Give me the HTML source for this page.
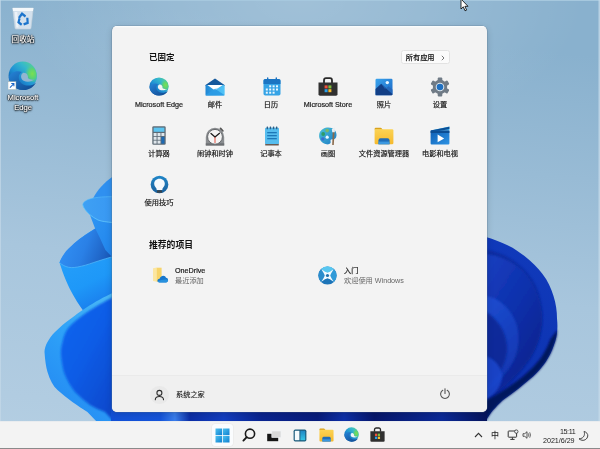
<!DOCTYPE html>
<html lang="zh-CN">
<head>
<meta charset="utf-8">
<title>Windows 11 开始菜单</title>
<style>
*{margin:0;padding:0;box-sizing:border-box}
html,body{width:600px;height:449px;overflow:hidden;background:#b3cbde}
body{position:relative;font-family:"Liberation Sans","Noto Sans CJK SC",sans-serif;color:#1b1b1b;-webkit-font-smoothing:antialiased}
#wall{position:absolute;left:0;top:0;width:600px;height:449px}
.abs{position:absolute}
.h,.app,.t1,.t2,.tt,.dlabel,#allbtn{will-change:transform}
/* desktop icons */
.dlabel{position:absolute;color:#fff;font-size:7.600px;line-height:9.500px;text-align:center;text-shadow:0 0 1.500px #000,0 0 1.500px #000,0 0 2px #000,0 1px 2px rgba(0,0,0,.8);white-space:nowrap;-webkit-text-stroke:.15px #fff}
/* start menu */
#start{position:absolute;left:112px;top:26px;width:375px;height:386px;background:#f3f3f3;border-radius:5px;box-shadow:0 0 0 0.6px rgba(90,115,140,.45),0 2px 7px rgba(0,0,0,.16);overflow:hidden}
#start:before{content:"";position:absolute;left:0;top:0;right:0;height:1.500px;background:linear-gradient(#fcfeff,#f3f3f3);z-index:0}
#foot{position:absolute;left:0;top:349px;width:375px;height:37px;background:#f0f0f0;border-top:1px solid #eaeaea}
.h{position:absolute;font-size:8.5px;font-weight:700;line-height:10px;color:#111;white-space:nowrap}
.app{position:absolute;width:70px;margin-left:-35px;text-align:center;font-size:7.2px;line-height:9px;color:#1a1a1a;white-space:nowrap;font-weight:400;-webkit-text-stroke:.2px #1a1a1a}
.ico{position:absolute}
#allbtn{position:absolute;left:289px;top:24px;width:48.500px;height:14px;background:#fbfbfb;border:0.5px solid #e2e2e2;border-radius:2.5px;font-size:7.2px;line-height:13px;padding-left:3.800px;color:#151515;white-space:nowrap;font-weight:500;-webkit-text-stroke:.12px #151515}
.t1{position:absolute;font-size:7.2px;line-height:9px;color:#1a1a1a;white-space:nowrap;font-weight:400;-webkit-text-stroke:.2px #1a1a1a}
.t2{position:absolute;font-size:7.2px;line-height:9px;color:#666;white-space:nowrap}
/* taskbar */
#task{position:absolute;left:0;top:421px;width:600px;height:28px;background:#f3f3f3;border-top:1px solid #e9ecef}
#task:after{content:"";position:absolute;left:0;bottom:0;width:600px;height:1px;background:#8a8a8a}
.tt{position:absolute;font-size:7.2px;line-height:9px;color:#222;white-space:nowrap;text-align:right}
</style>
</head>
<body>
<svg id="wall" viewBox="0 0 600 449">
<defs>
<linearGradient id="bg" x1="0.150" y1="0" x2="0" y2="1">
<stop offset="0" stop-color="#89b1ce"/><stop offset="0.270" stop-color="#98bbd5"/><stop offset="0.550" stop-color="#a8c6dd"/><stop offset="0.880" stop-color="#b1cce1"/><stop offset="1" stop-color="#b5cfe3"/>
</linearGradient>
<linearGradient id="rc" x1="0.3" y1="0" x2="0" y2="1"><stop offset="0" stop-color="#1039ba"/><stop offset="0.55" stop-color="#0d34b2"/><stop offset="0.85" stop-color="#0c2ca0"/><stop offset="1" stop-color="#0a2490"/></linearGradient>
<linearGradient id="l1" x1="0" y1="0" x2="1" y2="0"><stop offset="0" stop-color="#3fa0f4"/><stop offset="1" stop-color="#3898f2"/></linearGradient>
<linearGradient id="l2" x1="0" y1="0" x2="1" y2="1"><stop offset="0" stop-color="#339af5"/><stop offset="1" stop-color="#2084ec"/></linearGradient>
<linearGradient id="l3" x1="0" y1="0.300" x2="1" y2="0.600"><stop offset="0" stop-color="#3292f6"/><stop offset="0.500" stop-color="#2a80e6"/><stop offset="1" stop-color="#1a58b8"/></linearGradient>
<linearGradient id="l4" x1="0" y1="0" x2="0.300" y2="1"><stop offset="0" stop-color="#2aa4fc"/><stop offset="0.700" stop-color="#1e98f8"/><stop offset="1" stop-color="#1a7cec"/></linearGradient>
<linearGradient id="l5" x1="0.800" y1="0" x2="0.300" y2="1"><stop offset="0" stop-color="#48b6f6"/><stop offset="0.450" stop-color="#2ea2f8"/><stop offset="1" stop-color="#2388f2"/></linearGradient>
<linearGradient id="l6" x1="0" y1="0" x2="0.800" y2="1"><stop offset="0" stop-color="#0e68f0"/><stop offset="0.500" stop-color="#0a5ce6"/><stop offset="1" stop-color="#0a48cc"/></linearGradient>
<linearGradient id="r2" x1="0" y1="0" x2="0.600" y2="1"><stop offset="0" stop-color="#173fc0"/><stop offset="0.500" stop-color="#0e30ac"/><stop offset="1" stop-color="#09228c"/></linearGradient>
<linearGradient id="r3" x1="0" y1="0" x2="0.300" y2="1"><stop offset="0" stop-color="#1d4cd0"/><stop offset="1" stop-color="#1036b0"/></linearGradient>
<linearGradient id="strip" x1="0" y1="0" x2="1" y2="0"><stop offset="0" stop-color="#1250d6"/><stop offset="0.130" stop-color="#1554da"/><stop offset="0.170" stop-color="#3a7eec"/><stop offset="0.210" stop-color="#0c2ea6"/><stop offset="0.300" stop-color="#133ec0"/><stop offset="0.400" stop-color="#0a2490"/><stop offset="0.550" stop-color="#081c7c"/><stop offset="0.620" stop-color="#0e30a8"/><stop offset="0.700" stop-color="#07176c"/><stop offset="0.880" stop-color="#0c2a98"/><stop offset="1" stop-color="#06145c"/></linearGradient>
<radialGradient id="bgc" cx="0.5" cy="0.5" r="0.5"><stop offset="0" stop-color="#fff" stop-opacity=".2"/><stop offset="0.450" stop-color="#fff" stop-opacity=".125"/><stop offset="0.850" stop-color="#fff" stop-opacity=".03"/><stop offset="1" stop-color="#fff" stop-opacity="0"/></radialGradient>
<filter id="blur2" x="-20%" y="-20%" width="140%" height="140%"><feGaussianBlur stdDeviation="1.300"/></filter>
<filter id="blur1" x="-20%" y="-20%" width="140%" height="140%"><feGaussianBlur stdDeviation="0.800"/></filter>
</defs>
<rect width="600" height="449" fill="url(#bg)"/>
<ellipse cx="300" cy="0" rx="285" ry="150" fill="url(#bgc)"/>
<rect width="600" height="1" fill="#a6c8de"/><rect x="598.500" width="1.500" height="449" fill="#c4d9e8" opacity=".8"/><rect width="1" height="449" fill="#c4d9e8" opacity=".7"/>
<!-- left bloom -->
<path d="M59.500 262.500 C64 252 78 238 96 228 L113 240 L113 320 L90 320 C84 312 78 304 73 294.800 C68 286 63 274 59.500 262.500Z" fill="url(#l4)"/>
<path d="M59.500 262.500 C62 256 66 251 66.600 250.400 C70 247 73 244 77 240.900 C80 238.500 84 236 87.700 233.500 C90 232 93 230 96 228 L100 226 L113 240 L113 256.500 C108 258 103 259.500 98.300 261 C92 263 87 265 81.400 266.200 C76 267.500 72 268 68.700 267.300 C65 266.500 62 265 59.500 262.500Z" fill="url(#l3)"/>
<path d="M59.500 262.500 C62 265 65 266.500 68.700 267.300 C72 268 76 267.500 81.400 266.200 C87 265 92 263 98.300 261 C103 259.500 108 258 113 256.500" fill="none" stroke="#52b8fa" stroke-width=".9" opacity=".85"/>
<path d="M113 176.500 C104 182.500 97 190.500 93 198.500 L113 199.500Z" fill="#2f90f0"/>
<path d="M82.800 205 C83.500 207 85 210 89.700 214.600 C91.500 219 93 223 94.700 227.400 C96.500 231 98 234 99.700 237.400 C101.500 241.500 103.500 246 105.400 250 L113 258 L113 220 C100 218 90 212 82.800 205Z" fill="url(#l2)"/>
<path d="M82.800 205 C82.800 203 84 201.500 88 199.500 C93 197.500 102 196.600 113 196.700 L113 222.600 C107 222 102 221.500 98 220 C95 218.500 92 216.500 89.700 214.600 C86 211 83.500 208 82.800 205Z" fill="url(#l1)"/>
<path d="M82.800 205 C83.500 208 86 211 89.700 214.600 C92 216.500 95 218.500 98 220 C102 221.500 107 222 113 222.600" fill="none" stroke="#62c6fb" stroke-width=".9" opacity=".9"/>
<path d="M82.800 205 C82.800 203 84 201.500 88 199.500 C93 197.500 102 196.600 113 196.700" fill="none" stroke="#5cc0fa" stroke-width=".7" opacity=".8"/>
<path d="M44.500 352 C44.500 346 49 338 55 332 C60 327 65 323 70 319.300 C75 315.500 80 311.500 85.700 308 C90 305 95 302 99.400 299.700 C104 297.300 108 295 113 292.800 L113 423 L98 423 L87.400 412 C83 409 78 406 72.400 402 C67 398 62 394 57.500 390 C53 386 50 380 47.500 372 C46 367 45 360 44.500 352Z" fill="url(#l5)"/>
<path d="M113 297.200 C108 299.500 104 302 99.400 304.600 C96 306.500 93 308.500 89.600 310.500 C86 312.800 83 315 79.800 317.400 C76 320 73 323 70 326 C66 330 63.500 336 62.400 342.400 C61 347 60.500 352 61.200 357.400 C62 364 63 370 65 375 C67.500 381 71 387 75 392 C80 397 85 401 90 405 C95 408 100 410 105 412 L116 424 L113 424Z" fill="url(#l6)" filter="url(#blur2)"/>
<!-- right bloom -->
<path d="M486 237 C494 239 500 242 507 245 C514 248 519 252 524.500 256 C532 262 538 268 542.500 274 C548 281 551 288 553.500 296 C556 304 557 311 557 318.500 C557.500 323 557.500 327 557.300 330 C557 335 556 340 554 345 C552 351 549 357 545.700 362 C542 367 538 372 533 376.600 C528 381 523 385 518 389 C513 393 508 396.500 503 400 C499 403.500 496 407 492.700 410.500 C490 414 488 417 486.400 420 L480 424 L480 237Z" fill="url(#rc)"/>
<path d="M486 250 C505 252 526 266 536 286 C545 306 544 332 534 352 C526 368 512 382 496 394 L486 398Z" fill="#08218a" opacity=".5" filter="url(#blur1)"/>
<path d="M486 254 C500 256 514 262 524 272 C534 283 540 298 542 314 C543 330 538 346 530 358 C520 372 508 384 494 394 L486 398Z" fill="url(#r2)" filter="url(#blur1)"/>
<path d="M486 296 C500 298 512 310 517 326 C521 342 517 358 508 370 C500 380 493 387 486 392Z" fill="url(#r3)" filter="url(#blur1)"/>
<path d="M486 312 C496 318 506 330 507 346 C508 362 498 378 486 388Z" fill="#0a2694" opacity=".85" filter="url(#blur1)"/>
<path d="M486 356 C492 358 500 364 502 374 C503 384 496 394 486 400Z" fill="#1a4ad0" opacity=".8" filter="url(#blur1)"/>
<path d="M557.300 330 C557 335 556 340 554 345 C552 351 549 357 545.700 362 C542 367 538 372 533 376.600 C528 381 523 385 518 389 C513 393 508 396.500 503 400 C499 403.500 496 407 492.700 410.500 C490 414 488 417 486.400 420 L480 424 L480 404 C490 398 496 395 500 392.500 C505 389.500 510 386 515 382.500 C520 379 525 375 529.500 370.500 C534.500 366 538 361.500 541.500 357 C545 351.500 548 346 550 340 C552.500 336 555 333 557.300 330Z" fill="#06135a" opacity=".95" filter="url(#blur1)"/>
<!-- strip under start -->
<rect x="111" y="406" width="376" height="17" fill="url(#strip)"/>
</svg>

<!-- desktop icons -->
<svg class="abs" style="left:12.300px;top:7px" width="22" height="22.500" viewBox="0 0 25 23" preserveAspectRatio="none">
<path d="M0.800 1 L24.200 1 L21.600 21.400 Q21.500 22.500 20.300 22.500 L4.700 22.500 Q3.500 22.500 3.400 21.400Z" fill="#dbe6ef" fill-opacity=".9" stroke="#c3d0dc" stroke-width=".7"/>
<path d="M0.800 1 L24.200 1 L23.800 4.200 L1.200 4.200Z" fill="#f4f8fb"/>
<path d="M3 5 L6 5 L7.500 21 L5 21Z" fill="#f6fafc" opacity=".7"/>
<g fill="none" stroke="#1c74cc" stroke-width="2.500"><path d="M7.800 11.200 L11.400 6.800 L15.400 9.600"/><path d="M17.400 11 L17.800 16.200 L13.200 17.800"/><path d="M11 18.200 L7.400 15.600 L8.600 11.600"/></g>
</svg>
<div class="dlabel" style="left:2.500px;width:40px;top:34.500px">回收站</div>
<svg class="abs" style="left:8px;top:60.500px" width="29.500" height="29.500" viewBox="0 0 20 20">
<circle cx="10" cy="10" r="9.600" fill="url(#gEdgeA)"/><path d="M12 1 A9.600 9.600 0 0 1 18.600 14.200 L13 14 L9 6Z" fill="url(#gEdgeG)"/>
<path d="M0.500 11 C1.500 17 6 19.600 10.500 19.600 C14.500 19.600 17.500 17.500 19 14.500 C16 17.300 11.500 17.300 9 15 C6.500 12.700 6.800 9 9.500 7.500 C6 6 1.500 7.500 0.500 11Z" fill="url(#gEdgeB)"/>
<path d="M10.400 8 C8.400 9 8.300 12.200 10.600 13.400 C12.900 14.500 16 14 18 12.600 C16.400 13 14.400 12.700 13.500 11.600 C13.900 10 12.600 7.700 10.400 8Z" fill="#92b6d2"/>
<rect x="0" y="14" width="5.400" height="5.400" fill="#fff" stroke="#9aa" stroke-width=".3"/><path d="M1.300 18 L4 15.300 M2.200 15.300 L4 15.300 L4 17.100" stroke="#1a66c9" stroke-width=".7" fill="none"/>
</svg>
<div class="dlabel" style="left:-7.500px;width:60px;top:92.500px">Microsoft<br>Edge</div>

<!-- cursor -->
<svg class="abs" style="left:459.700px;top:-1px" width="9" height="13" viewBox="0 0 9 13"><path d="M1 0 L1 10 L3.300 7.800 L5 11.800 L6.600 11.100 L4.900 7.300 L8 7.300Z" fill="#fff" stroke="#000" stroke-width=".8"/></svg>

<div id="start">
<!-- ICONS START -->
<svg width="0" height="0" style="position:absolute"><defs>
<linearGradient id="gEdgeA" x1="0.1" y1="0.9" x2="0.8" y2="0.1"><stop offset="0" stop-color="#0c4f9c"/><stop offset="0.450" stop-color="#1f8fd4"/><stop offset="0.800" stop-color="#35b8cc"/><stop offset="1" stop-color="#4cc8a8"/></linearGradient>
<radialGradient id="gEdgeG" cx="0.720" cy="0.580" r="0.520"><stop offset="0" stop-color="#7be050"/><stop offset="0.500" stop-color="#5fd66a" stop-opacity=".85"/><stop offset="1" stop-color="#4cc8a8" stop-opacity="0"/></radialGradient>
<linearGradient id="gEdgeB" x1="0" y1="0" x2="0.900" y2="1"><stop offset="0" stop-color="#2585d8"/><stop offset="0.500" stop-color="#1a66b4"/><stop offset="1" stop-color="#114a90"/></linearGradient>
<linearGradient id="gMail" x1="0" y1="0" x2="1" y2="0"><stop offset="0" stop-color="#1f86d4"/><stop offset="1" stop-color="#4cc1f6"/></linearGradient>
<linearGradient id="gPhoto" x1="0" y1="0" x2="1" y2="1"><stop offset="0" stop-color="#3aa5ee"/><stop offset="1" stop-color="#1a66c4"/></linearGradient>
<linearGradient id="gFold" x1="0" y1="0" x2="0" y2="1"><stop offset="0" stop-color="#fbd354"/><stop offset="1" stop-color="#f5b92e"/></linearGradient>
<linearGradient id="gMov" x1="0" y1="0" x2="1" y2="1"><stop offset="0" stop-color="#0f5fb4"/><stop offset="1" stop-color="#2d93e4"/></linearGradient>
<linearGradient id="gTips" x1="0" y1="0" x2="0" y2="1"><stop offset="0" stop-color="#1f86c8"/><stop offset="1" stop-color="#1a5f9c"/></linearGradient>
<radialGradient id="gStart" cx="0.4" cy="0.4" r="0.7"><stop offset="0" stop-color="#4cb3ec"/><stop offset="1" stop-color="#1b6fb8"/></radialGradient>
<linearGradient id="gPal" x1="0" y1="0" x2="1" y2="1"><stop offset="0" stop-color="#4bc3d8"/><stop offset="1" stop-color="#1b78c4"/></linearGradient>
</defs></svg>

<!-- Edge -->
<svg class="ico" style="left:37px;top:51px" width="20" height="19" viewBox="0 0 20 20" preserveAspectRatio="none">
<circle cx="10" cy="10" r="9.600" fill="url(#gEdgeA)"/><path d="M12 1 A9.600 9.600 0 0 1 18.600 14.200 L13 14 L9 6Z" fill="url(#gEdgeG)"/>
<path d="M0.500 11 C1.500 17 6 19.600 10.500 19.600 C14.500 19.600 17.500 17.500 19 14.500 C16 17.300 11.500 17.300 9 15 C6.500 12.700 6.800 9 9.500 7.500 C6 6 1.500 7.500 0.500 11Z" fill="url(#gEdgeB)"/>
<path d="M10.400 8 C8.400 9 8.300 12.200 10.600 13.400 C12.900 14.500 16 14 18 12.600 C16.400 13 14.400 12.700 13.500 11.600 C13.900 10 12.600 7.700 10.400 8Z" fill="#f3f3f3"/>
</svg>
<!-- Mail -->
<svg class="ico" style="left:93px;top:52px" width="20" height="18" viewBox="0 0 20 18">
<path d="M0.500 7 L10 0.400 L19.500 7 L19.500 8 L0.500 8Z" fill="#14589c"/>
<rect x="0.500" y="7" width="19" height="10.600" rx="1" fill="url(#gMail)"/>
<path d="M2.300 7 L17.700 7 L10 12.600Z" fill="#ffffff"/>
<path d="M0.500 17 L10 10.800 L19.500 17 Q19.500 17.600 18.500 17.600 L1.500 17.600 Q0.500 17.600 0.500 17Z" fill="#2b9be4" opacity=".9"/>
<path d="M10 10.800 L19.500 17 L19.500 8Z" fill="#56c6f8" opacity=".55"/>
</svg>
<!-- Calendar -->
<svg class="ico" style="left:151px;top:51px" width="18" height="19" viewBox="0 0 18 19">
<rect x="0.500" y="2" width="17" height="16.500" rx="1.800" fill="#35a3e6"/>
<path d="M0.500 7 L0.500 3.800 Q0.500 2 2.300 2 L15.700 2 Q17.500 2 17.500 3.800 L17.500 7Z" fill="#1b74c2"/>
<rect x="4" y="0.300" width="1.400" height="3.600" rx=".7" fill="#1b74c2"/><rect x="12.600" y="0.300" width="1.400" height="3.600" rx=".7" fill="#1b74c2"/>
<g fill="#e9f6fd"><rect x="6.200" y="8.300" width="2" height="2"/><rect x="9.600" y="8.300" width="2" height="2"/><rect x="13" y="8.300" width="2" height="2"/>
<rect x="2.800" y="11.500" width="2" height="2"/><rect x="6.200" y="11.500" width="2" height="2"/><rect x="9.600" y="11.500" width="2" height="2"/><rect x="13" y="11.500" width="2" height="2"/>
<rect x="2.800" y="14.700" width="2" height="2"/><rect x="6.200" y="14.700" width="2" height="2"/><rect x="9.600" y="14.700" width="2" height="2"/></g>
</svg>
<!-- Store -->
<svg class="ico" style="left:206px;top:51px" width="20" height="19" viewBox="0 0 20 19">
<path d="M6 6 L6 3.500 Q6 1.200 8 1.200 L12 1.200 Q14 1.200 14 3.500 L14 6" fill="none" stroke="#2a2a2a" stroke-width="1.800"/>
<path d="M0.500 5.500 L19.500 5.500 L19.500 17.300 Q19.500 18.700 18 18.700 L2 18.700 Q0.500 18.700 0.500 17.300Z" fill="#303030"/>
<rect x="6.600" y="8.400" width="3" height="3" fill="#f0513c"/><rect x="10.400" y="8.400" width="3" height="3" fill="#7ebc3c"/>
<rect x="6.600" y="12.200" width="3" height="3" fill="#2a9fe8"/><rect x="10.400" y="12.200" width="3" height="3" fill="#fbbc2c"/>
</svg>
<!-- Photos -->
<svg class="ico" style="left:263px;top:52px" width="18" height="18" viewBox="0 0 18 18">
<rect x="0.500" y="0.700" width="17" height="16.600" rx="1.200" fill="url(#gPhoto)"/>
<path d="M0.500 17.300 L0.500 11 L6.200 5.800 L17.500 16 L17.500 16.300 Q17.500 17.300 16.500 17.300Z" fill="#123f86"/>
<path d="M6.200 5.800 L17.500 16 L17.500 11.500 L13.500 8.200 L10 11Z" fill="#2466b8" opacity=".85"/>
<circle cx="12.300" cy="4.600" r="1.700" fill="#e8f6ff"/>
</svg>
<!-- Settings -->
<svg class="ico" style="left:318px;top:51px" width="20" height="20" viewBox="-10 -10 20 20">
<g fill="#707b86"><circle r="7.200"/>
<rect x="-2.300" y="-9.600" width="4.600" height="19.200" rx="1"/>
<rect x="-2.300" y="-9.600" width="4.600" height="19.200" rx="1" transform="rotate(60)"/>
<rect x="-2.300" y="-9.600" width="4.600" height="19.200" rx="1" transform="rotate(120)"/></g>
<circle r="4.300" fill="#dfe8f0"/><circle r="3.300" fill="#1f6fc0"/>
</svg>
<!-- Calculator -->
<svg class="ico" style="left:40px;top:100px" width="14" height="19" viewBox="0 0 14 19">
<rect x="0.300" y="0.300" width="13.400" height="18.400" rx="1.300" fill="#5d6b76"/>
<rect x="1.600" y="1.600" width="10.800" height="4.200" fill="#5cc4f0"/>
<g fill="#dfe6eb"><rect x="1.600" y="7" width="3" height="3"/><rect x="5.500" y="7" width="3" height="3"/>
<rect x="1.600" y="10.800" width="3" height="3"/><rect x="5.500" y="10.800" width="3" height="3"/>
<rect x="1.600" y="14.600" width="3" height="3"/><rect x="5.500" y="14.600" width="3" height="3"/></g>
<rect x="9.400" y="7" width="3" height="3" fill="#dfe6eb"/><rect x="9.400" y="10.800" width="3" height="6.800" fill="#1c6ab4"/>
</svg>
<!-- Alarm clock -->
<svg class="ico" style="left:93px;top:100.500px" width="20" height="19" viewBox="0 0 20 19">
<path d="M15.500 1.500 L17.800 3.800" stroke="#555" stroke-width="1.800" stroke-linecap="round"/>
<path d="M0.800 18.500 L0.800 10 A9.200 9.200 0 0 1 19.200 10 L19.200 18.500Z" fill="#8a8d90"/>
<rect x="0.800" y="16.300" width="18.400" height="2.200" fill="#6c6f72"/>
<circle cx="10" cy="9.800" r="7.400" fill="#f4f4f4" stroke="#5e6164" stroke-width=".9"/>
<path d="M10 10 L6 6.500 M10 10 L14.500 6.300" stroke="#1d1d1d" stroke-width="1.300" stroke-linecap="round" fill="none"/>
<path d="M10 10 L10 16" stroke="#e2402c" stroke-width=".9"/>
</svg>
<!-- Notepad -->
<svg class="ico" style="left:151.500px;top:100px" width="16" height="20" viewBox="0 0 16 20">
<rect x="1.200" y="17.300" width="13.600" height="2.200" rx=".6" fill="#6b5a50"/>
<rect x="1" y="1.800" width="14" height="16.200" rx="1" fill="#56bdee"/>
<g fill="#2d5f88"><rect x="2.600" y="0.600" width="1.500" height="2.600" rx=".5"/><rect x="5.700" y="0.600" width="1.500" height="2.600" rx=".5"/><rect x="8.800" y="0.600" width="1.500" height="2.600" rx=".5"/><rect x="11.900" y="0.600" width="1.500" height="2.600" rx=".5"/></g>
<g fill="#1d78b8"><rect x="3.200" y="6" width="9.600" height="1.300"/><rect x="3.200" y="9" width="9.600" height="1.300"/><rect x="3.200" y="12" width="9.600" height="1.300"/></g>
</svg>
<!-- Paint -->
<svg class="ico" style="left:206px;top:100px" width="20" height="20" viewBox="0 0 20 20">
<path d="M9 1.500 C14.500 0.800 19 4.500 18.500 9.500 C18.200 13 16 13.500 14.500 13.300 C13 13.100 12.200 14 12.600 15.300 C13.200 17.300 11.500 18.800 8.500 18.300 C3.500 17.500 0.500 13 1.200 8.500 C1.800 4.500 5 2 9 1.500Z" fill="url(#gPal)"/>
<circle cx="5.200" cy="8" r="1.900" fill="#2f9c68"/><circle cx="9.200" cy="4.600" r="1.800" fill="#79b86a"/>
<circle cx="4.800" cy="13" r="1.700" fill="#3b6fd0"/><circle cx="9.200" cy="11.200" r="1.600" fill="#eaf8ff"/>
<path d="M14.800 4 L16.600 4.800 L15.800 19 L14.200 19Z" fill="#8a6a4c"/><path d="M13.800 3 L17 1.600 L16.800 6.200 L14.200 6.200Z" fill="#e8eef2"/>
</svg>
<!-- Explorer -->
<svg class="ico" style="left:262px;top:101px" width="20" height="18" viewBox="0 0 20 18">
<path d="M0.600 2 Q0.600 0.800 1.800 0.800 L6.500 0.800 Q7.300 0.800 7.800 1.500 L8.800 2.800 L0.600 2.800Z" fill="#d9a21c"/>
<rect x="0.600" y="2.300" width="18.800" height="15" rx="1.300" fill="url(#gFold)"/>
<path d="M4.500 17.300 L4.500 13.200 Q4.500 11.300 6.500 11.300 L13.500 11.300 Q15.500 11.300 15.500 13.200 L15.500 17.300Z" fill="#1f6db8"/>
<rect x="4.500" y="14.600" width="11" height="2.700" fill="#3b98e0"/>
</svg>
<!-- Movies -->
<svg class="ico" style="left:318px;top:100px" width="20" height="19" viewBox="0 0 20 19">
<path d="M0.600 4.600 L19.400 0.600 L19.400 4.600Z" fill="#39b4f0"/>
<path d="M0.600 4.600 L19.400 0.800 L19.400 3 L4 6Z" fill="#0c4e94"/>
<rect x="0.600" y="4.600" width="18.800" height="14" rx="1" fill="url(#gMov)"/>
<rect x="0.600" y="4.600" width="18.800" height="2.400" fill="#0c4e94"/>
<path d="M7.600 8.600 L14.200 12.400 L7.600 16.200Z" fill="#fff"/>
</svg>
<!-- Tips -->
<svg class="ico" style="left:37.800px;top:149.300px" width="19" height="19" viewBox="0 0 20 20">
<circle cx="10" cy="10" r="9.300" fill="url(#gTips)"/>
<path d="M10 4 C13.600 4 15.600 6.600 15.600 9.200 C15.600 11.400 14.300 12.600 13.500 13.600 C13 14.300 13 15 13 15.800 L7 15.800 C7 15 7 14.300 6.500 13.600 C5.700 12.600 4.400 11.400 4.400 9.200 C4.400 6.600 6.400 4 10 4Z" fill="#f4f9fd"/>
<rect x="7.300" y="16" width="5.400" height="2.800" rx="1" fill="#39434c"/>
</svg>
<!-- OneDrive rec -->
<svg class="ico" style="left:40px;top:240px" width="18" height="18" viewBox="0 0 18 18">
<path d="M1 2.200 L5 1.500 L5 15.700 L1 15Z" fill="#fbe6a2"/><rect x="4.800" y="1.700" width="4.800" height="14" fill="#f7d46a"/>
<path d="M7.600 16.500 C5.900 16.500 5.200 15.300 5.500 14.200 C5.800 13.300 6.600 12.900 7.400 13 C7.800 11.700 9 9.900 11 9.700 C12.600 9.600 13.600 10.600 14 11.800 C15.400 11.900 16.200 13 16.100 14.300 C16 15.600 15.200 16.500 14 16.500Z" fill="#1676cc"/>
<path d="M7.600 16.500 C6.600 16.500 5.900 16 5.600 15.300 C8 14 12 13 16 13.600 C16.200 15 15.400 16.500 14 16.500Z" fill="#2c98e2" opacity=".8"/>
</svg>
<!-- Get started -->
<svg class="ico" style="left:206px;top:239.500px" width="19" height="19" viewBox="-10 -10 20 20">
<circle r="9.600" fill="#1c74b8"/>
<path d="M0 0 L-6.800 -6.800 A9.600 9.600 0 0 1 6.800 -6.800Z" fill="#58c6f0"/>
<path d="M0 0 L6.800 -6.800 A9.600 9.600 0 0 1 6.800 6.800Z" fill="#2f9ad8"/>
<path d="M0 0 L-6.800 6.800 A9.600 9.600 0 0 1 -6.800 -6.800Z" fill="#2a8ccc"/>
<path d="M-6.600 -6.600 Q-2 -3.400 0 -2.900 Q2 -3.400 6.600 -6.600 Q3.400 -2 2.900 0 Q3.400 2 6.600 6.600 Q2 3.400 0 2.900 Q-2 3.400 -6.600 6.600 Q-3.400 2 -2.900 0 Q-3.400 -2 -6.600 -6.600Z" fill="#f2faff"/>
<circle r="1.700" fill="#2272b0"/>
</svg>
<!-- ICONS END -->
<div class="h" style="left:37px;top:26px">已固定</div>
<div id="allbtn">所有应用<svg style="position:absolute;left:38.500px;top:3.800px" width="4" height="6" viewBox="0 0 4 6"><path d="M0.800 0.800 L3 3 L0.800 5.200" fill="none" stroke="#666" stroke-width=".9"/></svg></div>

<div class="app" style="left:47px;top:74px">Microsoft Edge</div>
<div class="app" style="left:103px;top:74px">邮件</div>
<div class="app" style="left:159px;top:74px">日历</div>
<div class="app" style="left:216px;top:74px">Microsoft Store</div>
<div class="app" style="left:272px;top:74px">照片</div>
<div class="app" style="left:328px;top:74px">设置</div>
<div class="app" style="left:47px;top:123px">计算器</div>
<div class="app" style="left:103px;top:123px">闹钟和时钟</div>
<div class="app" style="left:159px;top:123px">记事本</div>
<div class="app" style="left:216px;top:123px">画图</div>
<div class="app" style="left:272px;top:123px">文件资源管理器</div>
<div class="app" style="left:328px;top:123px">电影和电视</div>
<div class="app" style="left:47px;top:172px">使用技巧</div>

<div class="h" style="left:37px;top:214px;font-size:8.800px">推荐的项目</div>
<div class="t1" style="left:63px;top:240px">OneDrive</div>
<div class="t2" style="left:63px;top:250px">最近添加</div>
<div class="t1" style="left:232px;top:240px">入门</div>
<div class="t2" style="left:232px;top:250px">欢迎使用 Windows</div>

<div id="foot">
<div class="abs" style="left:38px;top:9.500px;width:18.600px;height:18.600px;border-radius:50%;background:#e9e9e9"></div>
<svg class="abs" style="left:38px;top:9.500px" width="18.600" height="18.600" viewBox="0 0 18.600 18.600"><circle cx="9.400" cy="6.900" r="2.500" fill="none" stroke="#2e2e2e" stroke-width="1.100"/><path d="M5.300 13.800 C5.300 11 7 10.500 9.400 10.500 C11.800 10.500 13.500 11 13.500 13.800" fill="none" stroke="#2e2e2e" stroke-width="1.100" stroke-linecap="round"/></svg>
<div class="t1" style="left:63.500px;top:14px;-webkit-text-stroke:.12px #1a1a1a">系统之家</div>
<svg class="abs" style="left:327px;top:12px" width="12" height="12" viewBox="0 0 12 12"><path d="M3.800 2.300 A4.400 4.400 0 1 0 8.200 2.300" fill="none" stroke="#555" stroke-width="1.100" stroke-linecap="round"/><path d="M6 0.800 L6 5.500" stroke="#555" stroke-width="1.100" stroke-linecap="round"/></svg>
</div>
</div>

<div id="task">
<!-- TASKBAR ICONS -->
<div class="abs" style="left:212px;top:2px;width:21px;height:22px;border-radius:3px;background:#fafcfe;box-shadow:0 0 0 .5px rgba(0,0,0,.05)"></div>
<svg class="abs" style="left:215px;top:6px" width="15" height="15" viewBox="0 0 15 15">
<defs><linearGradient id="gWin" x1="0" y1="0" x2="1" y2="1"><stop offset="0" stop-color="#4cc2f0"/><stop offset="1" stop-color="#0f7fd0"/></linearGradient></defs>
<rect x="0.500" y="0.500" width="6.600" height="6.600" fill="url(#gWin)"/><rect x="7.900" y="0.500" width="6.600" height="6.600" fill="url(#gWin)"/>
<rect x="0.500" y="7.900" width="6.600" height="6.600" fill="url(#gWin)"/><rect x="7.900" y="7.900" width="6.600" height="6.600" fill="url(#gWin)"/>
</svg>
<svg class="abs" style="left:241px;top:5px" width="16" height="16" viewBox="0 0 16 16"><circle cx="9" cy="6.700" r="4.600" fill="none" stroke="#1a1a1a" stroke-width="1.600"/><path d="M5.700 10.200 L2.400 13.600" stroke="#1a1a1a" stroke-width="1.900" stroke-linecap="round"/></svg>
<svg class="abs" style="left:266px;top:8px" width="16" height="12" viewBox="0 0 16 12"><rect x="1.200" y="3.800" width="11" height="7.400" fill="#161616"/><rect x="5.800" y="1" width="9.200" height="6.600" fill="#d9d9d9" stroke="#f1f4f8" stroke-width=".6"/></svg>
<svg class="abs" style="left:293px;top:7px" width="14" height="13" viewBox="0 0 14 13">
<defs><linearGradient id="gWid" x1="0" y1="0" x2="0" y2="1"><stop offset="0" stop-color="#1f86c4"/><stop offset="1" stop-color="#35c4e4"/></linearGradient></defs>
<rect x="0.600" y="0.600" width="12.800" height="11.800" rx="1.600" fill="#1c5c7c"/><rect x="1.800" y="1.800" width="4.600" height="9.400" fill="#f4fafd"/><rect x="7.400" y="1.800" width="4.800" height="9.400" fill="url(#gWid)"/></svg>
<!-- explorer small -->
<svg class="abs" style="left:319px;top:6px" width="15" height="14" viewBox="0 0 20 18" preserveAspectRatio="none">
<path d="M0.600 2 Q0.600 0.800 1.800 0.800 L6.500 0.800 Q7.300 0.800 7.800 1.500 L8.800 2.800 L0.600 2.800Z" fill="#d9a21c"/>
<rect x="0.600" y="2.300" width="18.800" height="15" rx="1.300" fill="url(#gFold)"/>
<path d="M4.500 17.300 L4.500 13.200 Q4.500 11.300 6.500 11.300 L13.500 11.300 Q15.500 11.300 15.500 13.200 L15.500 17.300Z" fill="#1f6db8"/>
<rect x="4.500" y="14.600" width="11" height="2.700" fill="#3b98e0"/>
</svg>
<!-- edge small -->
<svg class="abs" style="left:344px;top:5px" width="15" height="15" viewBox="0 0 20 20">
<circle cx="10" cy="10" r="9.600" fill="url(#gEdgeA)"/><path d="M12 1 A9.600 9.600 0 0 1 18.600 14.200 L13 14 L9 6Z" fill="url(#gEdgeG)"/>
<path d="M0.500 11 C1.500 17 6 19.600 10.500 19.600 C14.500 19.600 17.500 17.500 19 14.500 C16 17.300 11.500 17.300 9 15 C6.500 12.700 6.800 9 9.500 7.500 C6 6 1.500 7.500 0.500 11Z" fill="url(#gEdgeB)"/>
<path d="M10.400 8 C8.400 9 8.300 12.200 10.600 13.400 C12.900 14.500 16 14 18 12.600 C16.400 13 14.400 12.700 13.500 11.600 C13.900 10 12.600 7.700 10.400 8Z" fill="#f1f4f8"/>
</svg>
<!-- store small -->
<svg class="abs" style="left:370px;top:5px" width="15" height="15" viewBox="0 0 20 19" preserveAspectRatio="none">
<path d="M6 6 L6 3.500 Q6 1.200 8 1.200 L12 1.200 Q14 1.200 14 3.500 L14 6" fill="none" stroke="#2a2a2a" stroke-width="1.800"/>
<path d="M0.500 5.500 L19.500 5.500 L19.500 17.300 Q19.500 18.700 18 18.700 L2 18.700 Q0.500 18.700 0.500 17.300Z" fill="#303030"/>
<rect x="6.600" y="8.400" width="3" height="3" fill="#f0513c"/><rect x="10.400" y="8.400" width="3" height="3" fill="#7ebc3c"/>
<rect x="6.600" y="12.200" width="3" height="3" fill="#2a9fe8"/><rect x="10.400" y="12.200" width="3" height="3" fill="#fbbc2c"/>
</svg>
<!-- tray -->
<svg class="abs" style="left:474px;top:10px" width="9" height="6" viewBox="0 0 9 6"><path d="M1 5 L4.500 1.400 L8 5" fill="none" stroke="#333" stroke-width="1.100"/></svg>
<svg class="abs" style="left:507px;top:7px" width="12" height="12" viewBox="0 0 12 12"><rect x="1.200" y="2" width="8.400" height="6.200" rx=".6" fill="none" stroke="#333" stroke-width="1"/><path d="M3.300 10.400 L7.600 10.400 M5.400 8.400 L5.400 10.400" stroke="#333" stroke-width="1"/><circle cx="9.300" cy="2.600" r="1.700" fill="#f1f4f8" stroke="#333" stroke-width=".8"/></svg>
<svg class="abs" style="left:522px;top:8px" width="10" height="10" viewBox="0 0 10 10"><path d="M1 3.700 L2.800 3.700 L5 1.700 L5 8.300 L2.800 6.300 L1 6.300Z" fill="none" stroke="#333" stroke-width=".8" stroke-linejoin="round"/><path d="M6.400 3.400 Q7.400 5 6.400 6.600 M7.700 2.300 Q9.300 5 7.700 7.700" fill="none" stroke="#333" stroke-width=".7"/></svg>
<svg class="abs" style="left:578px;top:7.5px" width="12" height="12" viewBox="0 0 12 12"><path d="M6 1.500 C8.500 2 10 4 9.800 6 C9.500 9 6.500 10.800 4 10.300 C2.800 10 1.800 9.500 1 8.800 C3.500 8.800 5.500 7.500 6.200 5.500 C6.700 4 6.500 2.700 6 1.500Z" fill="none" stroke="#333" stroke-width=".9" stroke-linejoin="round"/></svg>
<div class="tt" style="right:25px;top:4.5px;letter-spacing:-.45px">15:11</div>
<div class="tt" style="right:25.500px;top:14px;letter-spacing:-.05px">2021/6/29</div>
<div class="tt" style="left:491px;top:9px;font-size:8px;color:#222;font-weight:500">中</div>
</div>
</body>
</html>
